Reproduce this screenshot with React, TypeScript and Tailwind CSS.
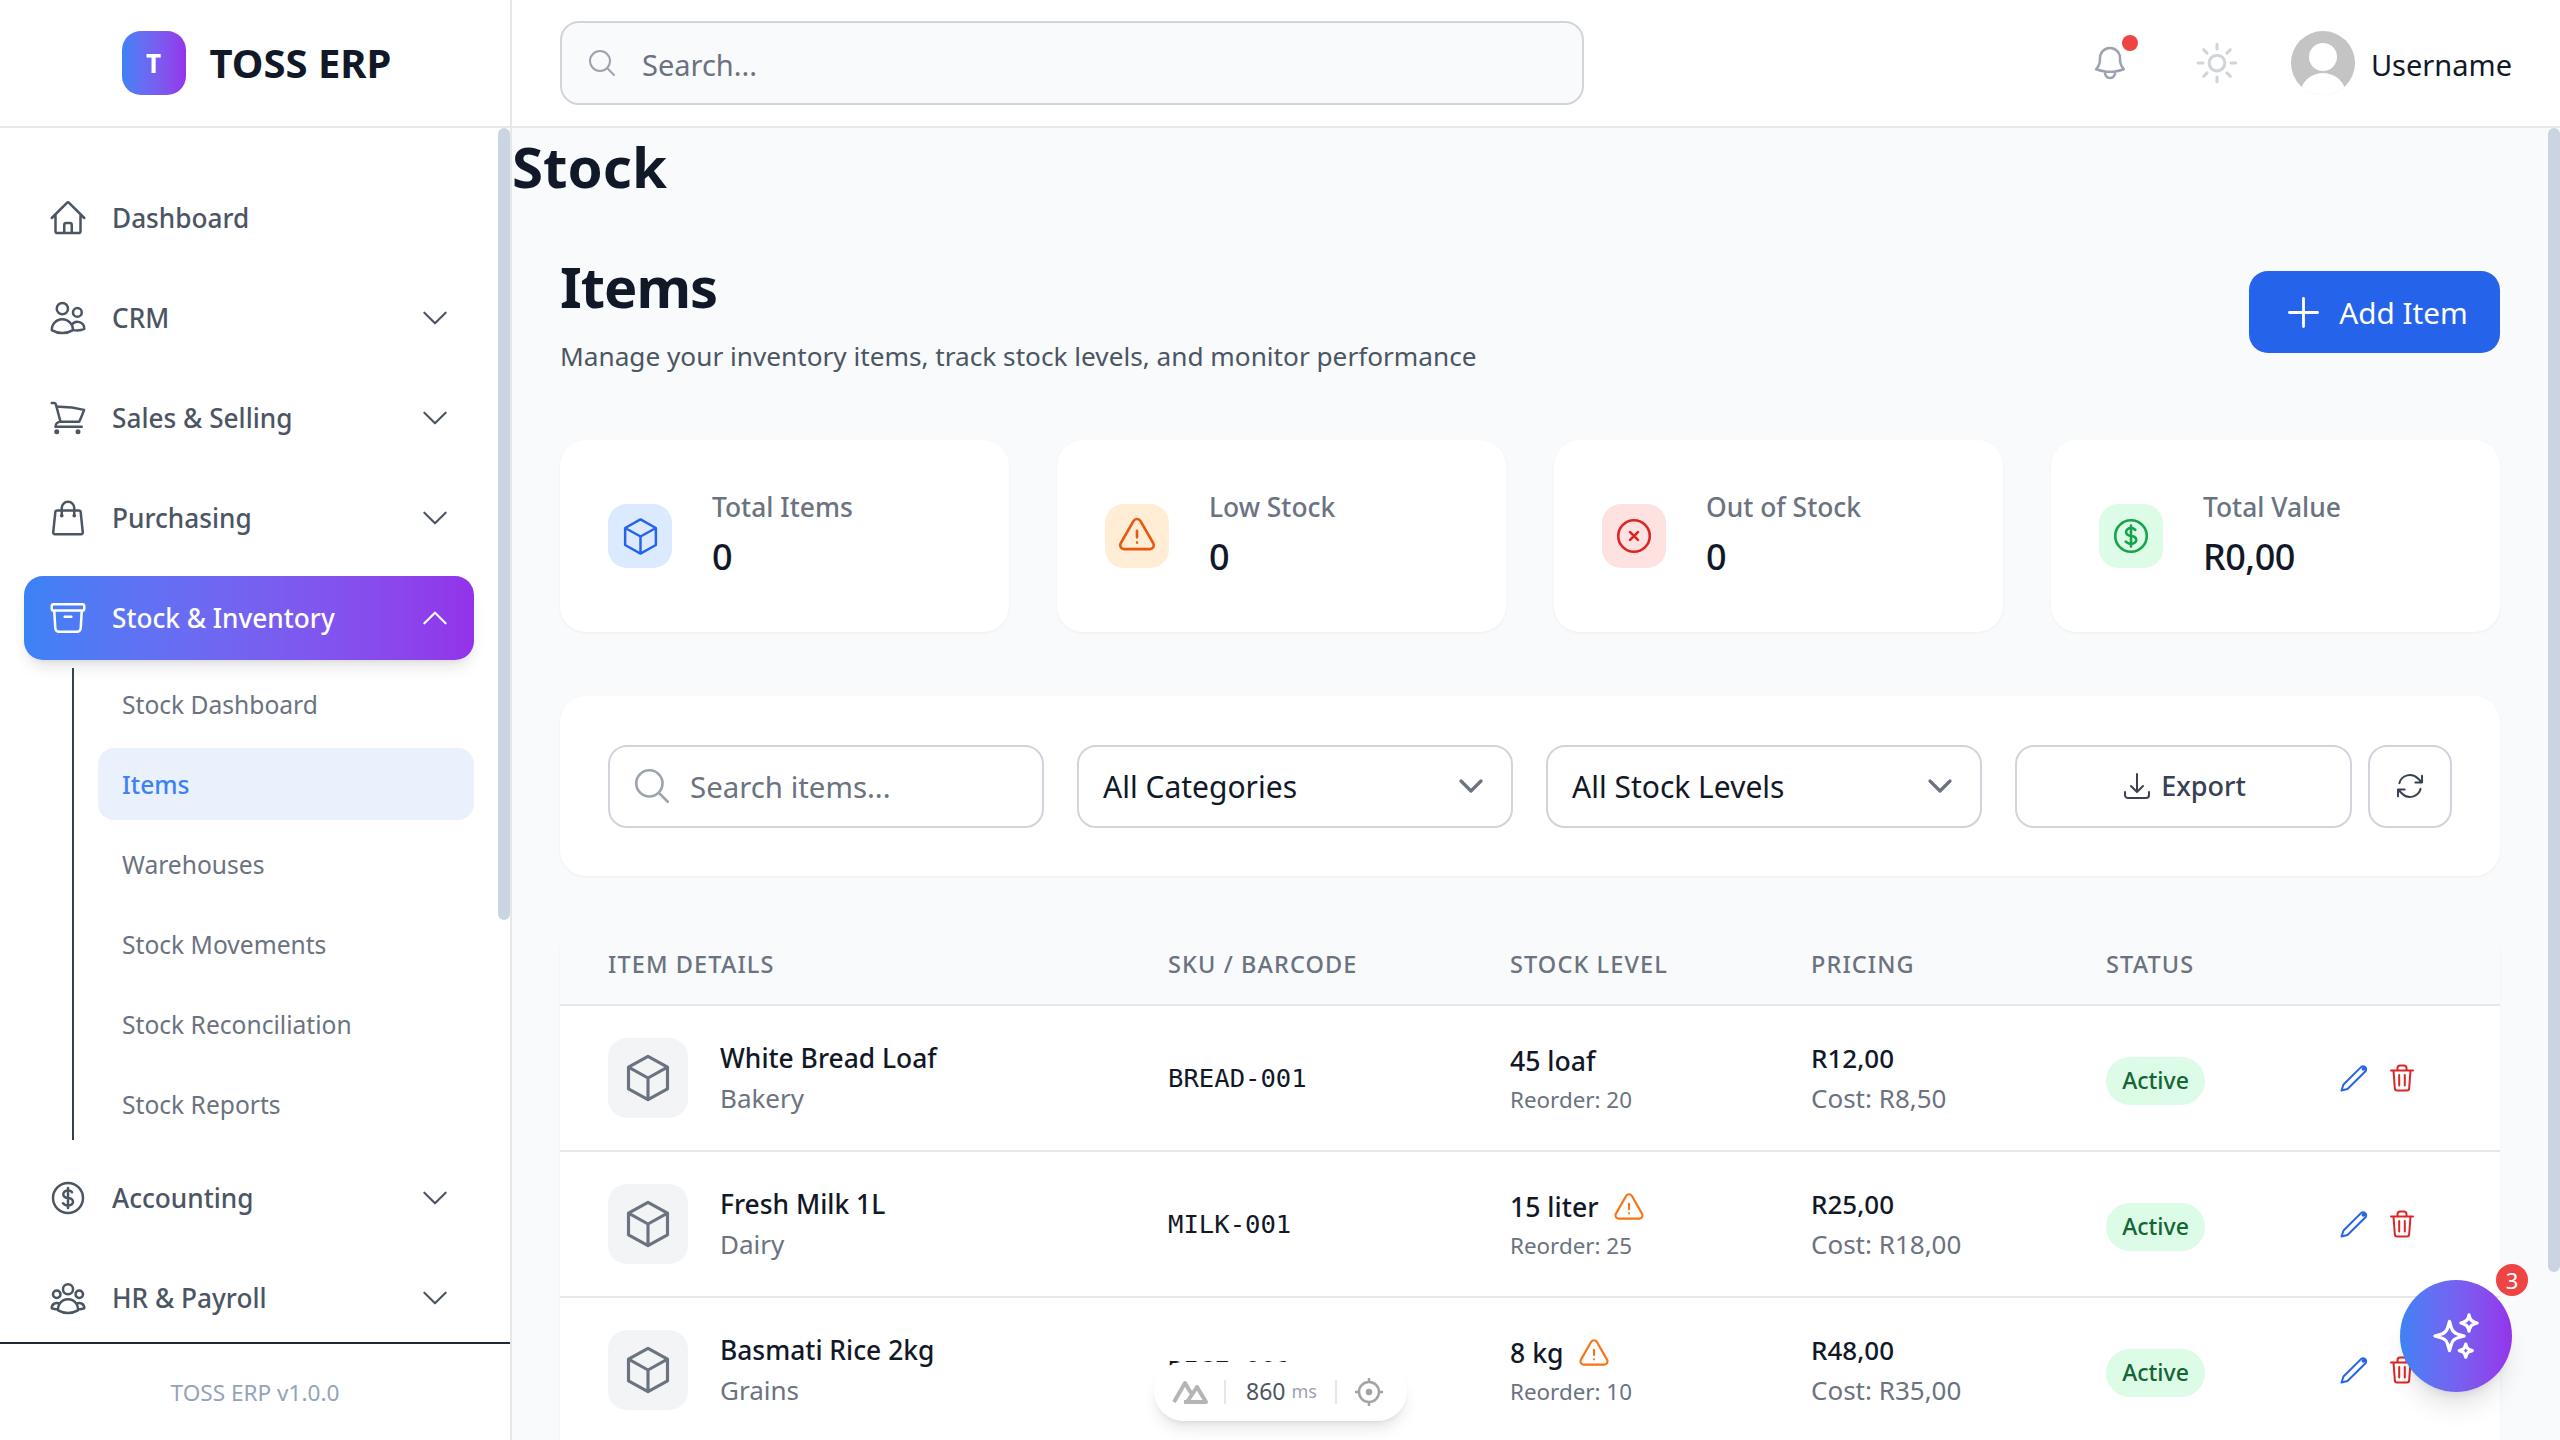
import React from "react";
import {
  HiOutlineHome, HiOutlineUsers, HiOutlineShoppingCart, HiOutlineShoppingBag, HiOutlineArchiveBox,
  HiOutlineCurrencyDollar, HiOutlineUserGroup, HiOutlineChevronDown, HiOutlineChevronUp, HiOutlineMagnifyingGlass,
  HiOutlineBell, HiOutlineSun, HiOutlinePlus, HiOutlineExclamationTriangle, HiOutlineXCircle,
  HiOutlineArrowDownTray, HiOutlineArrowPath, HiOutlineSparkles,
} from "react-icons/hi2";

function Cube({ className }: { className?: string }) {
  return (
    <svg viewBox="0 0 24 24" fill="none" stroke="currentColor" strokeWidth="1.45" strokeLinejoin="round" className={className}>
      <path d="M12 2 L21 7 V17 L12 22 L3 17 V7 Z M3 7 L12 12 L21 7 M12 12 V22" />
    </svg>
  );
}

function Pen() {
  return (
    <svg viewBox="0 0 28 28" fill="none" stroke="#2563eb" strokeWidth="2" strokeLinejoin="round" strokeLinecap="round" className="h-7 w-7 shrink-0">
      <path d="M1.5 26.5 L3.5 20.5 L21.5 2.6 a3.2 3.2 0 0 1 4.2 4.4 L7.5 25 Z" />
      <circle cx="23.4" cy="4.8" r="0.9" />
    </svg>
  );
}

function Trash() {
  return (
    <svg viewBox="0 0 24 28" fill="none" stroke="#dc2626" strokeWidth="2" strokeLinecap="round" strokeLinejoin="round" className="h-7 w-6 shrink-0">
      <path d="M1 6.5 H23 M3.5 6.5 L4.8 24 a2.5 2.5 0 0 0 2.5 2.5 H16.7 a2.5 2.5 0 0 0 2.5 -2.5 L20.5 6.5 M7.5 6.5 V4 a2.5 2.5 0 0 1 2.5 -2.5 h4 a2.5 2.5 0 0 1 2.5 2.5 V6.5 M9.2 11 V21.5 M14.8 11 V21.5" />
    </svg>
  );
}

const navTop = [
  { label: "Dashboard", Icon: HiOutlineHome, chev: false },
  { label: "CRM", Icon: HiOutlineUsers, chev: true },
  { label: "Sales & Selling", Icon: HiOutlineShoppingCart, chev: true },
  { label: "Purchasing", Icon: HiOutlineShoppingBag, chev: true },
];
const navBottom = [
  { label: "Accounting", Icon: HiOutlineCurrencyDollar, chev: true },
  { label: "HR & Payroll", Icon: HiOutlineUserGroup, chev: true },
];
const subs = ["Stock Dashboard", "Items", "Warehouses", "Stock Movements", "Stock Reconciliation", "Stock Reports"];
const stats = [
  { label: "Total Items", value: "0", Icon: Cube, box: "bg-[#dbeafe]", ic: "h-[41px] w-[41px] text-[#2563eb]" },
  { label: "Low Stock", value: "0", Icon: HiOutlineExclamationTriangle, box: "bg-[#ffedd5]", ic: "h-[42px] w-[42px] text-[#ea580c]" },
  { label: "Out of Stock", value: "0", Icon: HiOutlineXCircle, box: "bg-[#fee2e2]", ic: "h-[42px] w-[42px] text-[#dc2626]" },
  { label: "Total Value", value: "R0,00", Icon: HiOutlineCurrencyDollar, box: "bg-[#dcfce7]", ic: "h-[42px] w-[42px] text-[#16a34a]" },
];
const rows = [
  { name: "White Bread Loaf", cat: "Bakery", sku: "BREAD-001", qty: "45 loaf", low: false, re: "Reorder: 20", price: "R12,00", cost: "Cost: R8,50" },
  { name: "Fresh Milk 1L", cat: "Dairy", sku: "MILK-001", qty: "15 liter", low: true, re: "Reorder: 25", price: "R25,00", cost: "Cost: R18,00" },
  { name: "Basmati Rice 2kg", cat: "Grains", sku: "RICE-001", qty: "8 kg", low: true, re: "Reorder: 10", price: "R48,00", cost: "Cost: R35,00" },
];

function NavItem({ label, Icon, chev }: { label: string; Icon: any; chev: boolean }) {
  return (
    <div className="flex h-[84px] shrink-0 items-center rounded-[19px] px-6 text-[#4b5563]">
      <Icon className="mr-6 h-10 w-10 shrink-0" />
      <span className="flex-1 pt-[2px] text-[26.2px] font-medium">{label}</span>
      {chev && <HiOutlineChevronDown className="-mr-[2px] h-[34px] w-[34px]" />}
    </div>
  );
}

function Avatar() {
  return (
    <svg viewBox="0 0 64 64" className="h-16 w-16">
      <defs>
        <clipPath id="av"><circle cx="32" cy="32" r="32" /></clipPath>
      </defs>
      <g clipPath="url(#av)">
        <rect width="64" height="64" fill="#c4c4c4" />
        <circle cx="32" cy="26" r="14" fill="#fff" />
        <ellipse cx="32" cy="64" rx="23" ry="22" fill="#fff" />
        <rect y="56" width="64" height="8" fill="#fff" />
      </g>
    </svg>
  );
}

function Sidebar() {
  return (
    <aside className="flex h-full w-[512px] shrink-0 flex-col border-r-2 border-[#e5e7eb] bg-white">
      <div className="flex h-[128px] shrink-0 items-center justify-center gap-6 border-b-2 border-[#e5e7eb] pl-[3px]">
        <div className="flex h-16 w-16 items-center justify-center rounded-[19px] bg-gradient-to-r from-[#3b82f6] to-[#9333ea] text-[26px] font-bold text-white">T</div>
        <span className="text-[40px] font-bold text-[#111827]">TOSS ERP</span>
      </div>
      <div className="flex min-h-0 flex-1">
        <nav className="flex min-w-0 flex-1 flex-col gap-4 overflow-hidden px-6 pt-12">
          {navTop.map((n) => <NavItem key={n.label} {...n} />)}
          <div className="flex h-[84px] shrink-0 items-center rounded-[19px] bg-gradient-to-r from-[#3b82f6] to-[#9333ea] px-6 text-white shadow-lg">
            <HiOutlineArchiveBox className="mr-6 h-10 w-10 shrink-0" />
            <span className="flex-1 pt-[2px] text-[26.2px] font-medium">Stock &amp; Inventory</span>
            <HiOutlineChevronUp className="-mr-[2px] h-[34px] w-[34px]" />
          </div>
          <div className="-mt-2 ml-12 flex shrink-0 flex-col gap-2 border-l-2 border-[#374151] pl-6">
            {subs.map((s) => (
              <div key={s} className={`flex h-[72px] items-center rounded-[16px] px-6 pt-[2px] text-[24.6px] ${s === "Items" ? "bg-[#eaf1fd] font-medium text-[#3b82f6]" : "text-[#6b7280]"}`}>{s}</div>
            ))}
          </div>
          {navBottom.map((n) => <NavItem key={n.label} {...n} />)}
        </nav>
        <div className="h-[792px] w-3 shrink-0 rounded-full bg-[#cbd5e1]" />
      </div>
      <div className="flex h-[98px] shrink-0 items-center justify-center border-t-2 border-[#1f2937] pt-[2px] text-[22.6px] text-[#94a3b8]">TOSS ERP v1.0.0</div>
    </aside>
  );
}

function TopBar() {
  return (
    <header className="flex h-[128px] shrink-0 items-center border-b-2 border-[#e5e7eb] bg-white pl-12 pr-[48px]">
      <div className="flex h-[84px] w-[1024px] items-center gap-6 rounded-[19px] border-2 border-[#d1d5db] bg-[#f9fafb] px-6">
        <HiOutlineMagnifyingGlass className="h-8 w-8 text-[#9ca3af]" />
        <span className="pt-[3px] text-[29px] text-[#6b7280]">Search...</span>
      </div>
      <div className="ml-auto flex items-center">
        <div className="relative mr-[62px] text-[#9ca3af]">
          <HiOutlineBell className="h-10 w-10" />
          <span className="absolute -right-[8px] -top-[8px] h-4 w-4 rounded-full bg-[#ef4444]" />
        </div>
        <HiOutlineSun className="mr-[49px] h-[50px] w-[50px] text-[#d1d5db]" />
        <Avatar />
        <span className="ml-4 pt-[3px] text-[29px] text-[#111827]">Username</span>
      </div>
    </header>
  );
}

function Field({ label }: { label: string }) {
  return (
    <div className="flex h-[83px] w-[436px] items-center justify-between rounded-[19px] border-2 border-[#d1d5db] bg-white px-6">
      <span className="pt-[1px] text-[30px] text-[#111827]">{label}</span>
      <HiOutlineChevronDown className="h-8 w-8 text-[#6b7280]" strokeWidth={2.4} />
    </div>
  );
}

function Table() {
  return (
    <div className="rounded-t-[26px] bg-white shadow-[0_1px_3px_rgba(0,0,0,0.05)]">
      <div className="flex h-[82px] items-center rounded-t-[26px] border-b-2 border-[#e5e7eb] bg-[#f9fafb] px-12 pt-[2px] text-[23.5px] font-medium tracking-[1.1px] text-[#6b7280]">
        <span className="w-[560px]">ITEM DETAILS</span>
        <span className="w-[342px]">SKU / BARCODE</span>
        <span className="w-[301px]">STOCK LEVEL</span>
        <span className="w-[295px]">PRICING</span>
        <span>STATUS</span>
      </div>
      {rows.map((r) => (
        <div key={r.sku} className="flex h-[146px] items-center border-b-2 border-[#e5e7eb] px-12">
          <div className="flex w-[560px] items-center">
            <div className="flex h-20 w-20 items-center justify-center rounded-[19px] bg-[#f3f4f6]">
              <Cube className="h-[52px] w-[52px] text-[#6b7280]" />
            </div>
            <div className="ml-8">
              <div className="text-[26.4px] font-medium leading-[40px] text-[#111827]">{r.name}</div>
              <div className="text-[26px] leading-[40px] text-[#6b7280]">{r.cat}</div>
            </div>
          </div>
          <div className="w-[342px] font-['DejaVu_Sans_Mono',monospace] text-[25.6px] text-[#111827]">{r.sku}</div>
          <div className="w-[301px] pt-[3px]">
            <div className="flex h-10 items-center gap-[14px] text-[26.6px] font-medium text-[#111827]">
              {r.qty}
              {r.low && <HiOutlineExclamationTriangle className="h-[34px] w-[34px] text-[#f97316]" />}
            </div>
            <div className="text-[22.4px] leading-[36px] text-[#6b7280]">{r.re}</div>
          </div>
          <div className="w-[295px]">
            <div className="text-[26px] font-medium leading-[40px] text-[#111827]">{r.price}</div>
            <div className="text-[26px] leading-[40px] text-[#6b7280]">{r.cost}</div>
          </div>
          <div className="mt-[5px] flex h-12 w-[99px] items-center justify-center rounded-full bg-[#dcfce7] text-[23px] font-medium text-[#166534]">Active</div>
          <div className="ml-[135px] flex items-center gap-[22px]">
            <Pen />
            <Trash />
          </div>
        </div>
      ))}
    </div>
  );
}

export default function App() {
  return (
    <div className="relative flex h-[1440px] w-[2560px] overflow-hidden bg-white font-['Noto_Sans',sans-serif]">
      <Sidebar />
      <div className="flex h-full min-w-0 flex-1 flex-col">
        <TopBar />
        <div className="flex min-h-0 flex-1 bg-[#f9fafb]">
          <main className="min-w-0 flex-1 overflow-hidden">
            <h1 className="text-[56.4px] font-bold leading-[78px] text-[#111827]">Stock</h1>
            <div className="px-12 pt-[42px]">
              <div className="flex items-start justify-between">
                <div>
                  <h2 className="text-[56px] font-bold leading-[76px] tracking-[-1px] text-[#111827]">Items</h2>
                  <p className="mt-3 text-[26.2px] leading-[40px] text-[#4b5563]">Manage your inventory items, track stock levels, and monitor performance</p>
                </div>
                <button className="mt-[23px] flex h-[82px] w-[251px] items-center justify-center gap-[13px] rounded-[19px] bg-[#2563eb] text-white">
                  <HiOutlinePlus className="h-[45px] w-[45px]" />
                  <span className="pt-[2px] text-[29.7px]">Add Item</span>
                </button>
              </div>
              <div className="mt-16 grid grid-cols-4 gap-12">
                {stats.map(({ label, value, Icon, box, ic }) => (
                  <div key={label} className="flex h-[192px] items-center rounded-[26px] bg-white px-12 shadow-[0_1px_3px_rgba(0,0,0,0.05)]">
                    <div className={`flex h-16 w-16 items-center justify-center rounded-[19px] ${box}`}>
                      <Icon className={ic} />
                    </div>
                    <div className="ml-10 -mt-[2px]">
                      <div className="text-[26.4px] font-medium leading-[40px] text-[#6b7280]">{label}</div>
                      <div className="mt-[4px] text-[36px] font-medium leading-[52px] tracking-[-0.5px] text-[#111827]">{value}</div>
                    </div>
                  </div>
                ))}
              </div>
              <div className="mt-16 flex h-[180px] items-center gap-[33px] rounded-[26px] bg-white px-12 shadow-[0_1px_3px_rgba(0,0,0,0.05)]">
                <div className="flex h-[83px] w-[436px] items-center gap-[17px] rounded-[19px] border-2 border-[#d1d5db] pl-[21px]">
                  <HiOutlineMagnifyingGlass className="h-[42px] w-[42px] text-[#9ca3af]" />
                  <span className="pt-[2px] text-[29.4px] text-[#6b7280]">Search items...</span>
                </div>
                <Field label="All Categories" />
                <Field label="All Stock Levels" />
                <div className="flex h-[83px] w-[337px] items-center justify-center gap-2 rounded-[19px] border-2 border-[#d1d5db] text-[27px] font-medium text-[#374151]">
                  <HiOutlineArrowDownTray className="h-8 w-8" />Export
                </div>
                <div className="-ml-[17px] flex h-[83px] w-[84px] items-center justify-center rounded-[19px] border-2 border-[#d1d5db] text-[#374151]">
                  <HiOutlineArrowPath className="h-8 w-8" />
                </div>
              </div>
              <div className="mt-12"><Table /></div>
            </div>
          </main>
          <div className="h-[1144px] w-3 shrink-0 rounded-full bg-[#cbd5e1]" />
        </div>
      </div>
      <div className="absolute bottom-[19px] left-[1154px] flex h-[59px] w-[253px] items-center rounded-full bg-white pl-[18px] shadow-lg">
        <svg viewBox="0 0 36 24" className="h-6 w-9" fill="none" stroke="#b5b5b5" strokeWidth="4" strokeLinejoin="round">
          <path d="M2 22 L13 3 L19 13 M12 22 H34 L25 7 L15 22" />
        </svg>
        <span className="ml-4 h-6 w-[2px] bg-[#e5e7eb]" />
        <span className="ml-5 text-[23px] text-[#4b5563]">860</span>
        <span className="ml-[6px] text-[18px] text-[#9ca3af]">ms</span>
        <span className="ml-[18px] h-6 w-[2px] bg-[#e5e7eb]" />
        <svg viewBox="0 0 30 30" className="ml-[17px] h-[30px] w-[30px]" fill="none" stroke="#a3a3a3" strokeWidth="2.5">
          <circle cx="15" cy="15" r="10" />
          <circle cx="15" cy="15" r="2" fill="#a3a3a3" />
          <path d="M15 1v4M15 25v4M1 15h4M25 15h4" />
        </svg>
      </div>
      <div className="absolute bottom-12 right-12 flex h-28 w-28 items-center justify-center rounded-full bg-gradient-to-r from-[#3b82f6] to-[#9333ea] text-white shadow-xl">
        <HiOutlineSparkles className="h-[52px] w-[52px]" />
        <span className="absolute -right-4 -top-4 flex h-8 w-8 items-center justify-center rounded-full bg-[#ef4444] text-[22px]">3</span>
      </div>
    </div>
  );
}
